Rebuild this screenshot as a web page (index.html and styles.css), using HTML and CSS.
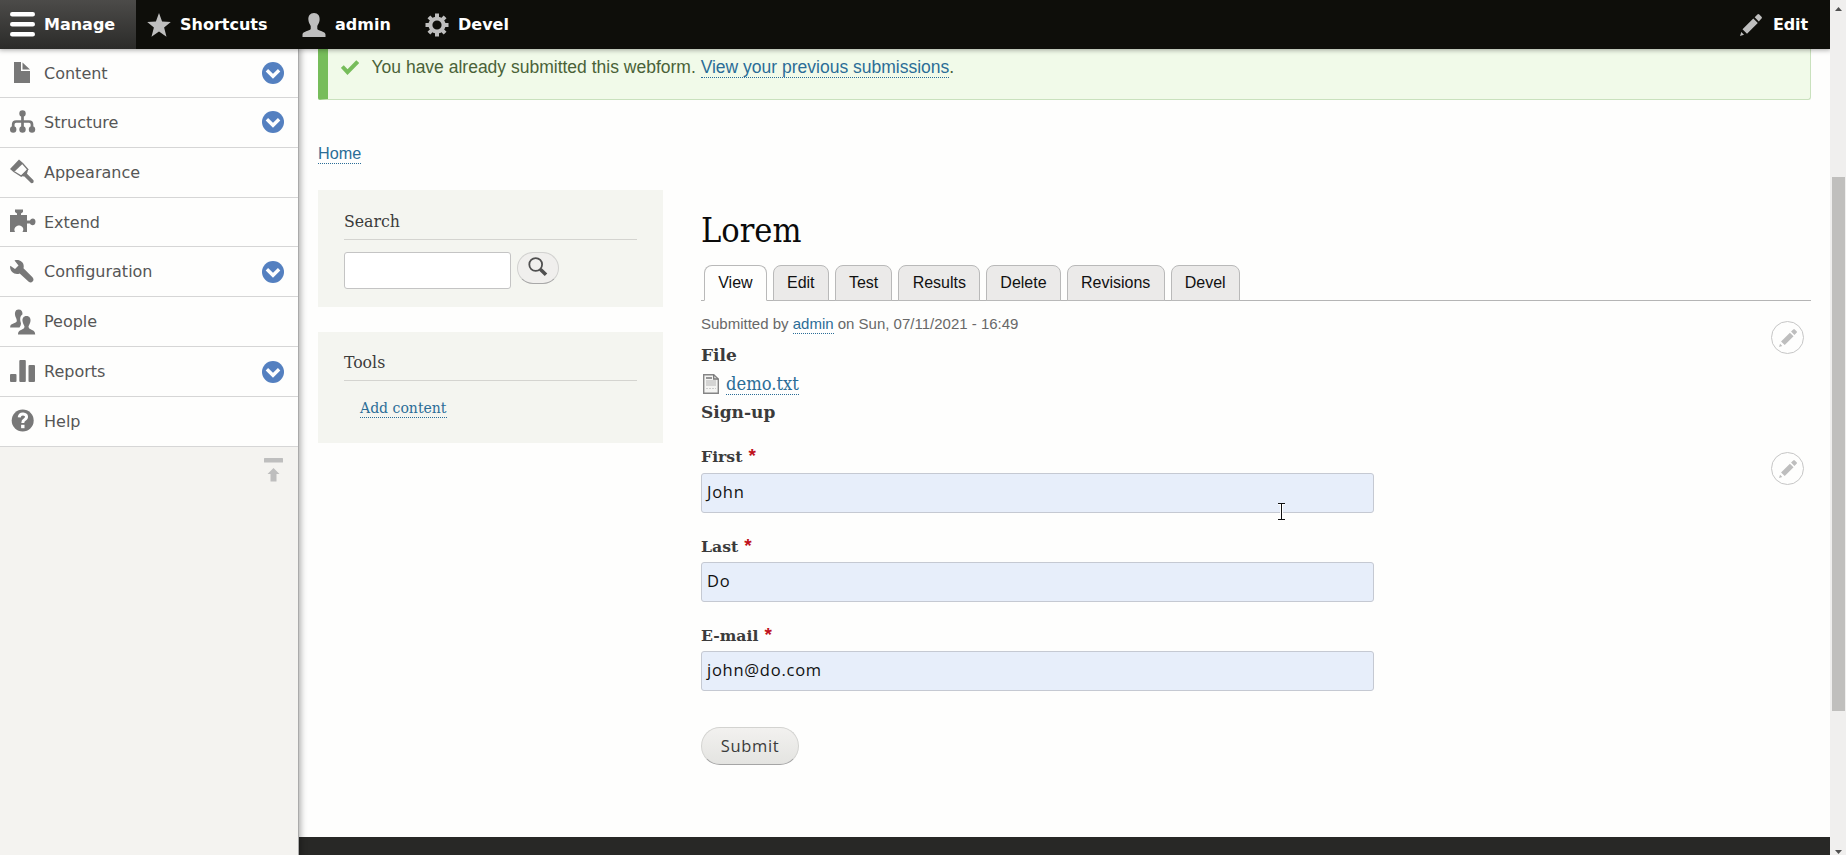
FILE: index.html
```html
<!DOCTYPE html>
<html lang="en">
<head>
<meta charset="utf-8">
<title>Lorem</title>
<link rel="stylesheet" href="styles.css">
</head>
<body>
<svg class="defs" width="0" height="0">
  <symbol id="chevron" viewBox="0 0 22 22"><circle cx="11" cy="11" r="11" fill="#5480c0"/><path d="M4.900 8.300l6.100 6 6.100-6" fill="none" stroke="#fff" stroke-width="3.400"/></symbol>
  <symbol id="pencil" viewBox="0 0 22 22"><path d="M0 22l1.300-4 2.700 2.700zM2.500 15.300L13.300 4.500l4.500 4.400L7 19.700zM14.700 3.200L17.400.5q1-.9 1.900 0l2.200 2.200q.9.900 0 1.900l-2.700 2.800z"/></symbol>
</svg>
<header class="bar">
  <a class="tab active"><svg width="26" height="25" viewBox="0 0 26 25"><path d="M3.200 2.300h20.600M3.200 12.300h20.600M3.200 22.200h20.600" stroke="#fff" stroke-width="4.400" stroke-linecap="round"/></svg><span>Manage</span></a>
  <a class="tab shortcuts"><svg width="24" height="24" viewBox="0 0 24 24"><path fill="#bebebe" d="M12 0l3.100 8.400 8.700.5-6.700 5.500 2.400 9.300L12 18.600l-7.500 5.100 2.400-9.300L.2 8.900l8.700-.5z"/></svg><span>Shortcuts</span></a>
  <a class="tab user"><svg width="24" height="24" viewBox="0 0 24 24"><path fill="#bebebe" d="M12 0c4 0 6 3 5.600 7-.3 3-1.600 4.500-2.300 6v3c1 2 8.200 2.300 8.200 5.500V24H.5v-2.500c0-3.200 7.200-3.500 8.200-5.500v-3c-.7-1.500-2-3-2.300-6C6 3 8 0 12 0z"/></svg><span>admin</span></a>
  <a class="tab devel"><svg width="24" height="24" viewBox="0 0 24 24"><circle cx="12" cy="12" r="6.600" fill="none" stroke="#bebebe" stroke-width="4"/><path stroke="#bebebe" stroke-width="4" d="M12 .5v4M12 19.500v4M.5 12h4M19.500 12h4M3.900 3.900l3 3M17.100 17.100l3 3M3.900 20.100l3-3M17.100 6.900l3-3"/></svg><span>Devel</span></a>
  <a class="tab edit"><svg width="22" height="22" fill="#bebebe"><use href="#pencil"/></svg><span>Edit</span></a>
</header>
<div class="body">
  <nav class="tray">
    <a class="item first"><svg class="ico" viewBox="0 0 26 26"><path d="M4 2h7v9h9v12H4zM12.500 2.500L20 9.500h-7.500z"/></svg><span>Content</span><svg class="chev"><use href="#chevron"/></svg></a>
    <a class="item"><svg class="ico" viewBox="0 0 26 26"><circle cx="12.500" cy="4.500" r="3.200"/><circle cx="3.200" cy="20.500" r="3.200"/><circle cx="12.500" cy="20.500" r="3.200"/><circle cx="22" cy="20.500" r="3.200"/><path d="M12.500 5v14M3.200 19v-3.500q0-3 3-3h12.800q3 0 3 3V19" fill="none" stroke="#787878" stroke-width="2.700"/></svg><span>Structure</span><svg class="chev"><use href="#chevron"/></svg></a>
    <a class="item"><svg class="ico" viewBox="0 0 26 26"><path d="M9 .5l4.200 3.700-9.400 9L0 10z"/><path d="M12.300 4.300l5.500 6.200-6.600 6.600-7-4.300" fill="none" stroke="#787878" stroke-width="1.300"/><path d="M18.200 10.200l-1.200 4.500 6.500 6.500q.8 3.400-2.500 2.900l-6.600-6.600-4-.400z"/></svg><span>Appearance</span></a>
    <a class="item"><svg class="ico" viewBox="0 0 26 26"><path d="M0 6h7V4.500L5 3V.5h8V3l-2 1.500V6h6v5.500h3c1-3 5.500-3 5.500 1.200S21 17 20 14.500h-3V23h-4.500c2.500-4-1-6.500-3.500-6.500S3 19 5 23H0z"/></svg><span>Extend</span></a>
    <a class="item"><svg class="ico" viewBox="0 0 26 26"><path d="M4.500 1.500C9-.2 15 3 13.500 9.200l9 9c2.800 3.300-1 6.800-3.800 4.600l-9-8.400C4.500 16.500-1 12 .3 6.700L5 10l3.500-3.500z"/></svg><span>Configuration</span><svg class="chev"><use href="#chevron"/></svg></a>
    <a class="item"><svg class="ico" viewBox="0 0 26 26"><path d="M8.700.5c3 0 4 2.300 3.700 5-2 1.500-3 4-1.500 8.500q.4 2-1.400 4.500H.2c-.5-4.500 5-3.500 6.500-6C7.300 9 4.500 8 5 4 5.300 1.500 6.500.5 8.700.5z"/><path d="M16.500 7c3 0 4.300 2.300 4 5s-1.700 4-2 5.500c0 4 7 2.500 6.700 8H8c-.3-5.500 6.500-4 6.500-8-.3-1.500-1.700-2.800-2-5.500s1-5 4-5z"/></svg><span>People</span></a>
    <a class="item"><svg class="ico" viewBox="0 0 26 26"><rect y="15" width="6.500" height="8" rx="1"/><rect x="9.300" y="1" width="6.500" height="22" rx="1"/><rect x="18.500" y="6" width="6.500" height="17" rx="1"/></svg><span>Reports</span><svg class="chev"><use href="#chevron"/></svg></a>
    <a class="item"><svg class="ico" viewBox="0 0 26 26"><circle cx="12.700" cy="12.500" r="11"/><path d="M9.200 9.300q.4-3.600 4-3.400c4.400.5 4 4.300 1.300 5.800q-1.700 1-1.700 3.200" fill="none" stroke="#fff" stroke-width="3"/><rect x="11.100" y="16.800" width="3.400" height="3.400" fill="#fff"/></svg><span>Help</span></a>
    <div class="orient"><svg width="19" height="24" viewBox="0 0 19 24" fill="#bebebe"><rect width="19" height="4.500" rx=".5"/><path d="M9.500 10l6 6h-3v7.500h-6V16h-3z"/></svg></div>
  </nav>
  <div class="page">
    <div class="status"><svg width="18" height="15" viewBox="0 0 18 15"><path d="M1.300 6.500l5.200 5.600L16.700 1.600" fill="none" stroke="#77bd5b" stroke-width="4"/></svg><p>You have already submitted this webform. <a class="link">View your previous submissions</a>.</p></div>
    <div class="crumb"><a class="link">Home</a></div>
    <div class="columns">
      <aside class="side">
        <section class="block search"><h2>Search</h2><div class="searchrow"><div class="sinput"></div><div class="sbtn"><svg width="20" height="20" viewBox="0 0 20 20" fill="none" stroke="#505050"><circle cx="7.700" cy="7.500" r="6.400" stroke-width="1.800"/><path d="M12.300 12.200l5.700 5.600" stroke-width="3.600"/></svg></div></div></section>
        <section class="block tools"><h2>Tools</h2><div class="add"><a class="link">Add content</a></div></section>
      </aside>
      <main class="main">
        <h1>Lorem</h1>
        <div class="tabs"><a class="on">View</a><a>Edit</a><a>Test</a><a>Results</a><a>Delete</a><a>Revisions</a><a>Devel</a></div>
        <div class="content">
          <article>
            <p class="by">Submitted by <a class="link">admin</a> on Sun, 07/11/2021 - 16:49</p>
            <div class="lab big">File</div>
            <div class="file"><svg width="16" height="20" viewBox="0 0 16 20"><path d="M.7.700h10L15.300 5v14.300H.700z" fill="#f4f4f2" stroke="#858585" stroke-width="1.400"/><path d="M10.700.700V5h4.600" fill="none" stroke="#777" stroke-width="1.300"/><path d="M3 4h6" stroke="#777" stroke-width="1.500"/><path d="M3 7h10M3 9h10M3 11h10" stroke="#b5b5b5"/><path d="M3 14.500h10" stroke="#ccc" stroke-dasharray="2 1"/></svg><a class="link">demo.txt</a></div>
            <div class="lab big signup">Sign-up</div>
            <label class="lab l1">First<b>*</b></label><div class="field">John</div>
            <label class="lab l2">Last<b>*</b></label><div class="field">Do</div>
            <label class="lab l3">E-mail<b>*</b></label><div class="field">john@do.com</div>
            <div class="submit">Submit</div>
          </article>
          <div class="quick"><div class="circle"><svg width="18" height="18" fill="#bebebe"><use href="#pencil"/></svg></div><div class="circle"><svg width="18" height="18" fill="#bebebe"><use href="#pencil"/></svg></div></div>
        </div>
      </main>
    </div>
    <footer class="foot"></footer>
  </div>
</div>
<div class="scroll"><svg width="7" height="4" viewBox="0 0 7 4"><path d="M0 4L3.500 0 7 4z"/></svg><div class="thumb"></div><svg width="7" height="4" viewBox="0 0 7 4"><path d="M0 0l3.500 4L7 0z"/></svg></div>
<svg class="cursor" width="9" height="17" viewBox="0 0 9 17"><path d="M1 .500h7M4.500 1v15M1 16.500h7" fill="none" stroke="#fff" stroke-width="3"/><path d="M1 .500h7M4.500 1v15M1 16.500h7" fill="none" stroke="#111" stroke-width="1"/></svg>
</body>
</html>
```
FILE: styles.css
```css
* { box-sizing: border-box; }
body { margin: 0; width: 1846px; height: 855px; overflow: hidden; background: #fefefd; color: #3b3b3b; display: grid; grid-template: 49px 806px / 1830px 16px; font-family: "DejaVu Serif Condensed", "DejaVu Serif", serif; font-stretch: condensed; }
svg { display: block; flex: none; }
h1, h2, p { margin: 0; font-weight: 400; }
.defs { position: absolute; }
.link { color: #2b6d97; border-bottom: 1px dotted #2b6d97; }

.bar { grid-area: 1 / 1; display: flex; background: #0e0e0a; color: #fff; font: bold 16px/41px "DejaVu Sans", sans-serif; position: relative; z-index: 2; box-shadow: 0 0 5px 1px rgba(0,0,0,.35); }
.tab { display: flex; align-items: center; height: 49px; padding-left: 10px; }
.tab span { margin-left: 9px; white-space: nowrap; }
.active { width: 136px; background: linear-gradient(#4c4b49, #2b2b29); }
.active svg { margin-left: -1px; }
.shortcuts { width: 156px; padding-left: 11px; }
.user { width: 123px; padding-left: 10px; }
.devel { padding-left: 10px; }
.edit { margin-left: auto; padding: 0 22px 0 0; }
.edit span { margin-left: 11px; letter-spacing: -.1px; }

.body { grid-area: 2 / 1; display: flex; }
.tray { width: 299px; background: #f4f3f0; border-right: 1px solid #aaa; box-shadow: 0 0 6px 2px rgba(0,0,0,.3); position: relative; z-index: 1; font: 16px/20px "DejaVu Sans", sans-serif; color: #565656; }
.item { display: flex; align-items: center; height: 49.830px; padding: 0 14.500px 0 10px; background: #fefefd; border-bottom: 1px solid #d6d6d6; }
.item.first { height: 49px; }
.item span { flex: 1; margin-left: 8px; padding-top: 1px; }
.ico { width: 26px; height: 26px; fill: #787878; }
.chev { width: 22px; height: 22px; }
.orient { display: flex; justify-content: flex-end; padding: 11px 15px 0 0; }

.page { flex: 1; display: flex; flex-direction: column; }
.status { display: flex; height: 51px; margin: 0 19px 0 19px; background: #f1fae9; border: solid #c9e1bd; border-width: 0 1px 1px 10px; border-left-color: #77bd5b; border-radius: 0 0 3px 2px; padding: 11px 0 0 13px; font: 17.500px/20px "Liberation Sans", sans-serif; color: #4a6238; }
.status p { margin: -3px 0 0 12.500px; }
.crumb { margin: 44px 0 0 19px; height: 46px; font: 16.200px/19px "Liberation Sans", sans-serif; }
.crumb .link { padding-bottom: 1px; }
.columns { display: flex; height: 647px; padding-left: 19px; }
.side { width: 345px; display: flex; flex-direction: column; gap: 25px; }
.block { background: #f4f5f0; padding: 21px 26px 0; }
.search { height: 117px; }
.tools { height: 111px; padding-top: 20px; }
.block h2 { height: 29px; border-bottom: 1px solid #d4d4d0; font-size: 17.500px; line-height: 21px; }
.searchrow { display: flex; gap: 6px; padding-top: 12px; }
.sinput { width: 167px; height: 37px; background: #fff; border: 1px solid #c4c4c4; border-radius: 3px; }
.sbtn { width: 42px; height: 32px; border: 1px solid #d2d2d0; border-bottom-color: #a8a8a8; border-radius: 16px; background: #f0efed; padding: 4px 0 0 10px; }
.add { padding: 17px 0 0 16px; font-size: 15.600px; line-height: 20px; }

.main { width: 1110px; margin-left: 38px; }
h1 { height: 75px; padding-top: 18px; font-size: 34px; line-height: 44px; color: #0a0a0a; }
.tabs { height: 36px; display: flex; gap: 6px; padding-left: 3px; border-bottom: 1px solid #b5b5b5; font: 16px/33px "Liberation Sans", sans-serif; color: #111; }
.tabs a { height: 36px; padding: 0 13.200px; border: 1px solid #b9b9b9; border-radius: 8px 8px 0 0; background: #ebeae9; }
.tabs .on { background: #fefefd; border-bottom-color: #fefefd; }
.content { display: flex; justify-content: space-between; }
article { width: 673px; }
.by { padding-top: 14px; height: 41px; font: 15px/18px "Liberation Sans", sans-serif; color: #686868; }
.by .link { padding-bottom: 1px; }
.lab { font-family: "DejaVu Serif", serif; font-stretch: normal; font-weight: 700; font-size: 15.700px; line-height: 20px; height: 20px; display: block; }
.big { font-size: 17px; height: 27px; line-height: 26px; }
.file { display: flex; gap: 7px; padding: 5px 0 0 2px; height: 31px; font-size: 18.200px; }
.file .link { height: 21px; line-height: 19px; }
.signup { height: 46px; line-height: 24px; }
.lab b { font: bold 19px/15px "Liberation Sans", sans-serif; color: #c0121c; margin-left: 6px; position: relative; top: 0; }
.l1 { height: 27px; line-height: 22px; }
.l2, .l3 { height: 49px; padding-top: 24px; }
.field { height: 40px; border: 1px solid #c5c9d2; border-radius: 3px; background: #e7eefa; padding: 7px 5px; font: 16.500px/22px "Open Sans", sans-serif; letter-spacing: .75px; color: #111; }
.submit { width: 98px; height: 38px; margin-top: 36px; border: 1px solid #d3d3d0; border-bottom-color: #a5a5a5; border-radius: 19px; background: linear-gradient(#f2f1ef, #e4e4e1); font: 16.500px/35px "Open Sans", sans-serif; letter-spacing: .65px; text-align: center; }
.quick { padding: 20px 7px 0 0; display: flex; flex-direction: column; gap: 98px; }
.circle { width: 33px; height: 33px; border: 1px solid #c6c6c6; border-radius: 50%; display: grid; place-items: center; }
.foot { height: 18px; background: #282826; }

.scroll { grid-area: 1 / 2 / 3 / 3; background: #f0efee; display: flex; flex-direction: column; align-items: center; padding-top: 7px; fill: #505050; z-index: 3; }
.thumb { width: 13px; height: 534px; margin: 166px 0 139px; background: #c0bfbd; }
.cursor { position: absolute; left: 1277px; top: 503px; z-index: 4; }
```
